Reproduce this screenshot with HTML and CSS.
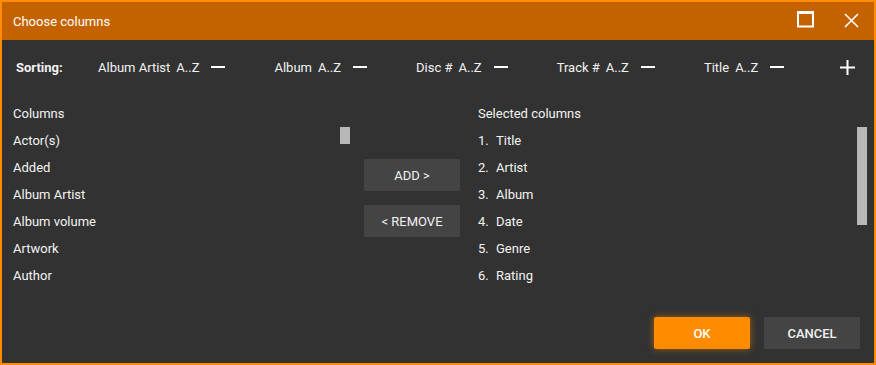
FILE: index.html
```html
<!DOCTYPE html>
<html>
<head>
<meta charset="utf-8">
<link rel="stylesheet" href="styles.css">
</head>
<body>
<div class="window">
  <div class="titlebar">
    <span class="title">Choose columns</span>
    <div class="winctl">
      <svg class="ico-max" width="17" height="17" viewBox="0 0 17 17"><rect x="1" y="1.5" width="15" height="14" fill="none" stroke="#fff" stroke-width="2"/><rect x="0" y="0" width="17" height="3" fill="#fff"/></svg>
      <svg class="ico-close" width="15" height="15" viewBox="0 0 15 15"><path d="M1 1L14 14M14 1L1 14" stroke="#fff" stroke-width="1.6"/></svg>
    </div>
  </div>
  <div class="sortbar">
    <span class="sort-label">Sorting:</span>
    <div class="sort-items">
      <div class="sort-item"><span>Album Artist</span><span>A..Z</span><i class="minus"></i></div>
      <div class="sort-item"><span>Album</span><span>A..Z</span><i class="minus"></i></div>
      <div class="sort-item"><span>Disc #</span><span>A..Z</span><i class="minus"></i></div>
      <div class="sort-item"><span>Track #</span><span>A..Z</span><i class="minus"></i></div>
      <div class="sort-item"><span>Title</span><span>A..Z</span><i class="minus"></i></div>
    </div>
    <svg class="plus" width="15" height="15" viewBox="0 0 15 15"><path d="M7.5 0V15M0 7.5H15" stroke="#fff" stroke-width="2"/></svg>
  </div>
  <div class="main">
    <div class="pane left">
      <div class="pane-head">Columns</div>
      <div class="list">
        <div class="row">Actor(s)</div>
        <div class="row">Added</div>
        <div class="row">Album Artist</div>
        <div class="row">Album volume</div>
        <div class="row">Artwork</div>
        <div class="row">Author</div>
        <div class="scroll small"></div>
      </div>
    </div>
    <div class="mid">
      <button class="btn">ADD &gt;</button>
      <button class="btn">&lt; REMOVE</button>
    </div>
    <div class="pane right">
      <div class="pane-head">Selected columns</div>
      <div class="list">
        <div class="row"><span class="num">1.</span>Title</div>
        <div class="row"><span class="num">2.</span>Artist</div>
        <div class="row"><span class="num">3.</span>Album</div>
        <div class="row"><span class="num">4.</span>Date</div>
        <div class="row"><span class="num">5.</span>Genre</div>
        <div class="row"><span class="num">6.</span>Rating</div>
        <div class="scroll big"></div>
      </div>
    </div>
  </div>
  <div class="footer">
    <button class="btn strong ok">OK</button>
    <button class="btn strong">CANCEL</button>
  </div>
</div>
</body>
</html>
```
FILE: styles.css
```css
* { box-sizing: border-box; }
html, body { margin: 0; padding: 0; background: #323232; }
body { font-family: Roboto, "Liberation Sans", sans-serif; font-size: 13px; color: #f2f2f2; }
.window {
  width: 876px; height: 365px;
  border: 2px solid #ff8c00;
  background: #323232;
  display: flex; flex-direction: column;
}
.titlebar {
  height: 38px; flex: none;
  background: #c56200;
  display: flex; align-items: center;
  padding: 0 15px 0 11px;
}
.title { font-size: 13px; color: #fff; }
.winctl { margin-left: auto; display: flex; align-items: center; gap: 30px; }
.ico-max { display: block; margin-top: -3px; }
.ico-close { display: block; margin-top: -1px; }
.sortbar {
  height: 54px; flex: none;
  display: flex; align-items: center;
  padding: 0 19px 0 14px;
}
.sort-label { font-weight: 700; width: 82px; }
.sort-items { display: flex; gap: 49px; }
.sort-item { display: flex; align-items: center; }
.sort-item span + span { margin-left: 6px; }
.minus { display: block; width: 14px; height: 2px; background: #fff; margin-left: 12px; }
.plus { margin-left: auto; display: block; }
.main {
  flex: 1;
  display: flex;
  padding: 6px 7px 0 11px;
}
.pane { display: flex; flex-direction: column; }
.left { width: 337px; }
.right { flex: 1; margin-left: 18px; }
.pane-head, .row { height: 27px; line-height: 27px; white-space: nowrap; }
.list { position: relative; }
.num { display: inline-block; width: 18px; }
.scroll { position: absolute; right: 0; top: 0; width: 10px; background: #b8b8b8; }
.scroll.small { height: 17px; }
.scroll.big { height: 98px; }
.mid { width: 96px; margin-left: 14px; display: flex; flex-direction: column; gap: 14px; padding-top: 59px; }
.btn {
  width: 96px; height: 32px;
  border: none; border-radius: 2px;
  background: #444444; color: #f2f2f2;
  font-family: Roboto, "Liberation Sans", sans-serif;
  font-size: 13px; font-weight: 400;
  padding: 0; cursor: pointer;
}
.btn.strong { font-weight: 500; }
.footer {
  flex: none;
  display: flex; justify-content: flex-end; gap: 14px;
  padding: 0 14px 14px 0;
}
.btn.ok { background: #ff8c00; color: #fff; box-shadow: 0 0 7px rgba(255,140,0,0.55); }
```
